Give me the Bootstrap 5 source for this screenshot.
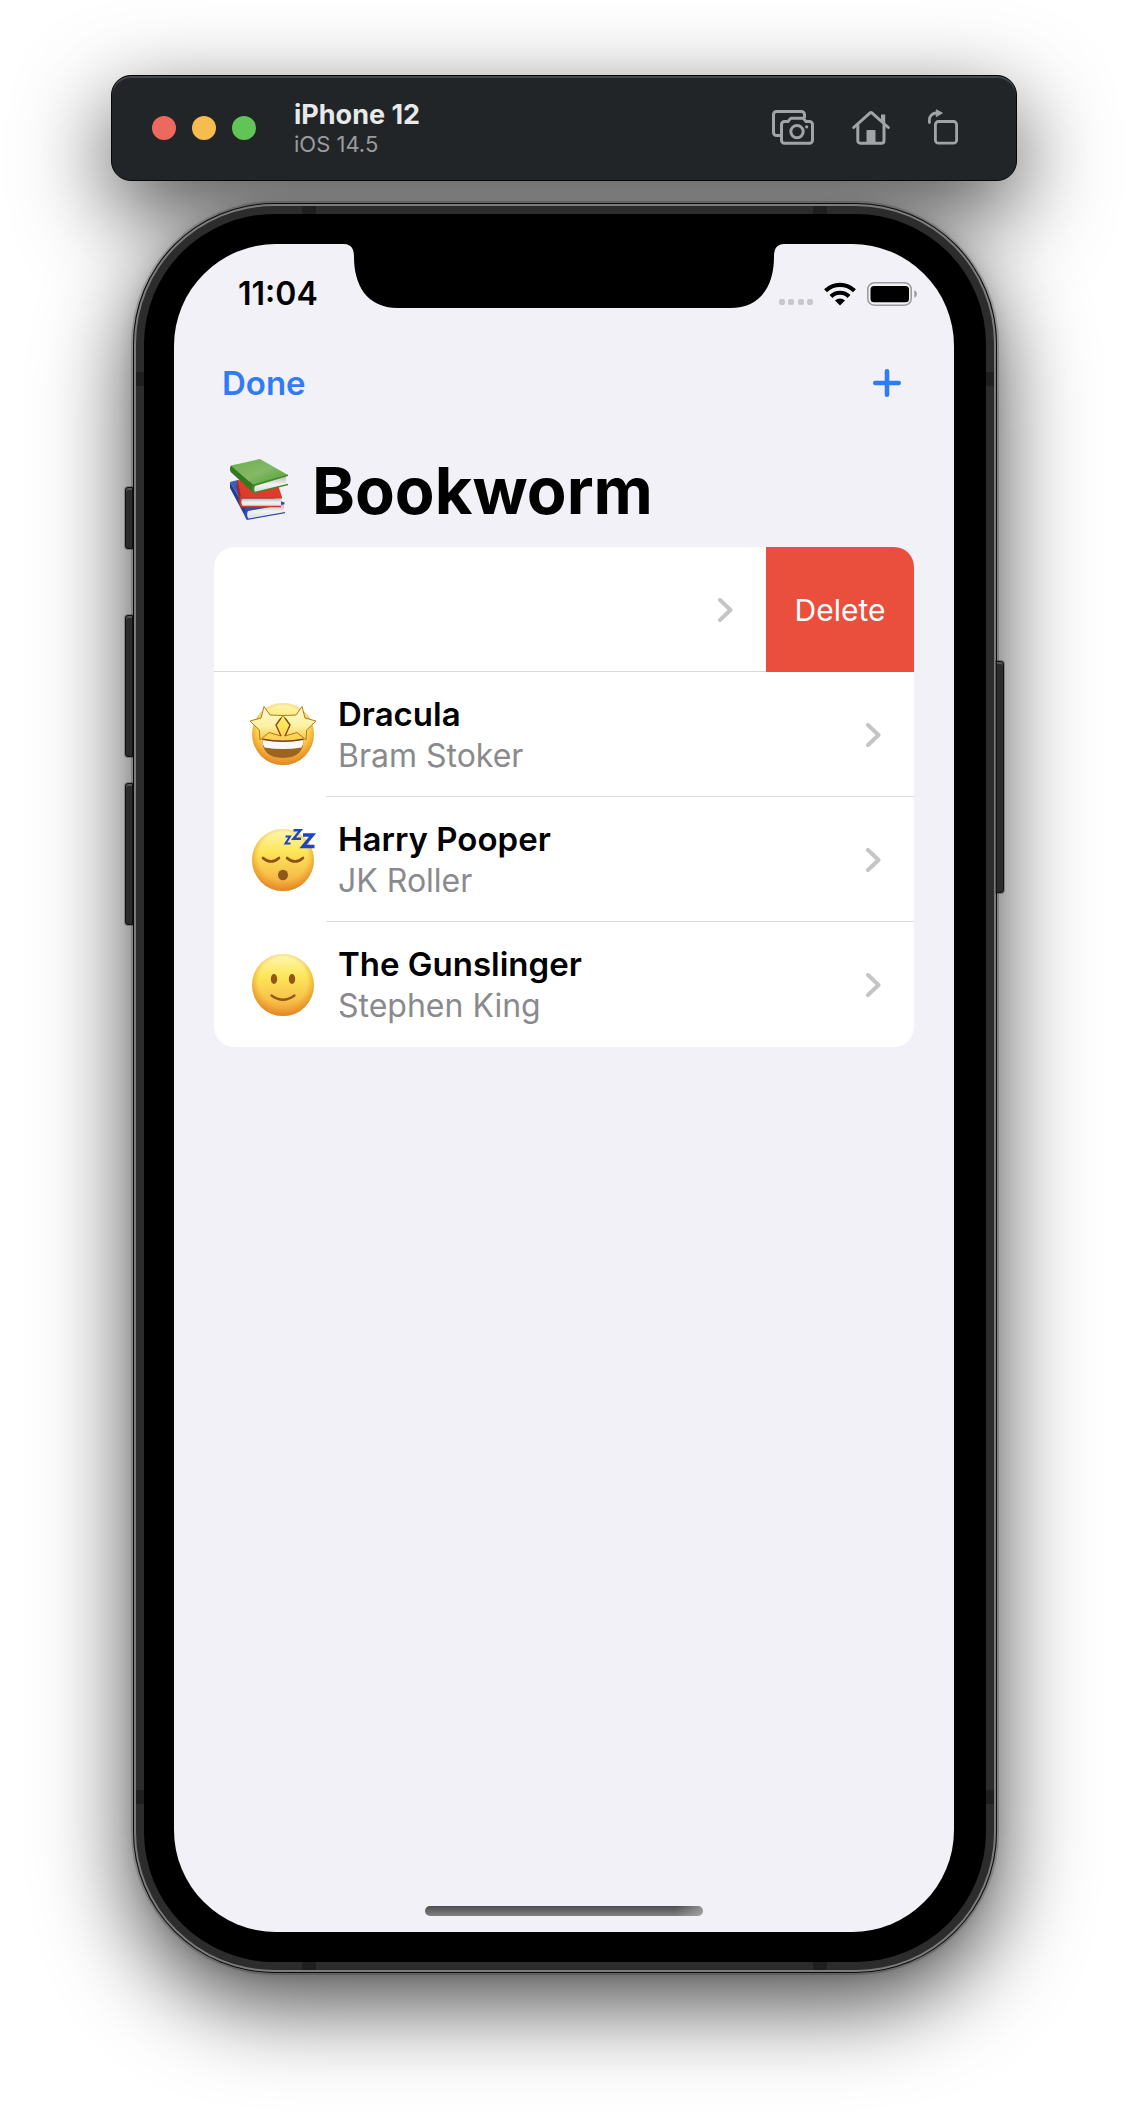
<!DOCTYPE html>
<html lang="en">
<head>
<meta charset="utf-8">
<meta name="viewport" content="width=device-width, initial-scale=1">
<title>Bookworm</title>
<link href="https://cdn.jsdelivr.net/npm/bootstrap@5.3.0/dist/css/bootstrap.min.css" rel="stylesheet">
<style>
  body { font-family: Inter, "Liberation Sans", sans-serif; background: #fff; color: #000; overflow-x: hidden; }
  svg { display: block; flex: none; }
  .stage { position: relative; z-index: 0; max-width: 906px; padding: 75px 0 151px; }

  /* simulator title bar */
  .sim-bar { position: relative; min-height: 106px; border-radius: 20px; background: #222528; border: 1px solid #050606;
    box-shadow: inset 0 2px 0 #43484a, 0 30px 90px rgba(0,0,0,.7); padding: 0 58px 0 40px; }
  .lights { gap: 16px; margin-right: 38px; }
  .light-dot { width: 24px; height: 24px; border: 0; border-radius: 50%; padding: 0; }
  .dot-close { background: #ed695e; } .dot-min { background: #f5bd4f; } .dot-zoom { background: #61c454; }
  .sim-label { padding-top: 2px; }
  .sim-name { font-size: 27px; line-height: 30px; font-weight: 700; color: #e8eaea; }
  .sim-os { font-size: 22px; line-height: 28px; color: #999c9e; }
  .tools { gap: 38px; }
  .tool-btn { border: 0; padding: 0; background: none; color: #a0a4a6; }

  /* phone body; its shadow sits on a layer behind the title bar */
  .phone { position: relative; margin: 22px 20px 0 22px; padding: 11px; border-radius: 141px; background: #2c2c2c;
    box-shadow: inset 0 0 0 1px #0c0c0c, inset 0 0 0 3px #7b7b7b, 0 0 0 2px rgba(0,0,0,.16); }
  .phone::before { content: ""; position: absolute; inset: 0; z-index: -1; border-radius: 141px;
    box-shadow: 0 30px 90px rgba(0,0,0,.72), 0 0 16px rgba(0,0,0,.12); }
  .bezel { background: #000; border-radius: 130px; padding: 30px 32px 30px 30px; }
  .screen { position: relative; min-height: 1688px; border-radius: 102px; background: #f2f1f7; overflow: hidden; }
  .side-key { position: absolute; width: 8px; background: #2b2b2b; border: 1px solid #111; box-shadow: inset 0 2px 0 #555, 0 0 0 1px rgba(0,0,0,.25); }
  .key-left { left: -8px; border-radius: 3px 0 0 3px; }
  .key-right { right: -7px; border-radius: 0 3px 3px 0; }
  .key-mute { top: 284px; height: 62px; } .key-up { top: 412px; height: 142px; } .key-down { top: 580px; height: 142px; }
  .key-power { top: 458px; height: 232px; }
  .band { position: absolute; background: #1f1f1f; }
  .band-v { width: 14px; height: 8px; } .band-h { width: 8px; height: 14px; }
  .b-top { top: 3px; } .b-bottom { bottom: 3px; } .b-left { left: 3px; } .b-right { right: 3px; }
  .b-x1 { left: 169px; } .b-x2 { right: 170px; } .b-y1 { top: 169px; } .b-y2 { bottom: 169px; }
  .notch { position: absolute; top: 0; left: 50%; margin-left: -220px; }

  .status { min-height: 100px; padding: 0 37px 0 64px; }
  .clock { font-size: 32px; line-height: 40px; font-weight: 600; }
  .status-icons { gap: 11px; }
  .app-nav { min-height: 78px; padding: 0 53px 0 48px; }
  .nav-btn { border: 0; background: none; padding: 0; color: #2f7cf6; font-size: 33px; line-height: 40px; font-weight: 600; }
  .app-title { min-height: 125px; padding: 12px 40px 0 56px; gap: 24px; }
  .app-title h1 { font-size: 65px; line-height: 80px; font-weight: 700; }

  .books { margin: 0 40px; border-radius: 20px; overflow: hidden; }
  .book { border: 0; padding: 0; min-height: 125px; background: #fff; color: #000; border-radius: 0; }
  .swiped { box-shadow: inset 0 -1px 0 #d8d8da; }
  .open-link { padding-right: 33px; }
  .delete-btn { width: 148px; border: 0; border-radius: 0; background: #ea4e3d; color: #fff; font-size: 30px; line-height: 40px; padding: 0; }
  .delete-btn:hover { background: #d8402f; color: #fff; }
  .book-link { color: #000; text-decoration: none; padding-left: 34px; }
  .book-text { margin-left: 8px; padding: 0 33px 0 12px; }
  .lined { box-shadow: inset 0 -1px 0 #dcdcde; }
  .book-name { font-size: 33px; line-height: 41px; font-weight: 600; }
  .book-author { font-size: 32px; line-height: 41px; color: #8a8a8e; }
  .home-pill { position: absolute; left: 50%; bottom: 16px; width: 278px; height: 10px; margin-left: -139px; border-radius: 5px;
    background: linear-gradient(100deg, transparent 90%, rgba(190,190,190,.6)), linear-gradient(#4e4e50, #808082); }
</style>
</head>
<body>
<!-- shared gradients -->
<svg width="0" height="0" class="position-absolute" aria-hidden="true">
  <defs>
    <linearGradient id="faceFill" x1="0" y1="0" x2="0" y2="1"><stop offset="0" stop-color="#fef6b4"/><stop offset=".35" stop-color="#fde75a"/><stop offset=".7" stop-color="#f8c54c"/><stop offset="1" stop-color="#f0a038"/></linearGradient>
    <radialGradient id="faceRim" cx=".5" cy=".44" r=".57"><stop offset=".68" stop-color="#ec9423" stop-opacity="0"/><stop offset="1" stop-color="#dd7d1a" stop-opacity=".85"/></radialGradient>
    <linearGradient id="starFill" x1="0" y1="0" x2="0" y2="1"><stop offset="0" stop-color="#fffbd6"/><stop offset=".6" stop-color="#fdf0a0"/><stop offset="1" stop-color="#f3c548"/></linearGradient>
    <linearGradient id="coverGreen" x1="0" y1="0" x2="1" y2="1"><stop offset="0" stop-color="#6cae4b"/><stop offset=".5" stop-color="#84b967"/><stop offset="1" stop-color="#4c9b2e"/></linearGradient>
    <linearGradient id="pages" x1="0" y1="0" x2="0" y2="1"><stop offset="0" stop-color="#b5b5b5"/><stop offset=".5" stop-color="#f2f2f2"/><stop offset="1" stop-color="#dcdcdc"/></linearGradient>
    <symbol id="chevron" viewBox="0 0 15 24"><path d="M2 2l10.500 10L2 22" fill="none" stroke="#c5c5c7" stroke-width="4" stroke-linecap="round" stroke-linejoin="round"/></symbol>
  </defs>
</svg>

<div class="stage mx-auto">
  <header class="sim-bar d-flex align-items-center">
    <div class="lights d-flex">
      <button type="button" class="light-dot dot-close" aria-label="Close"></button>
      <button type="button" class="light-dot dot-min" aria-label="Minimize"></button>
      <button type="button" class="light-dot dot-zoom" aria-label="Zoom"></button>
    </div>
    <div class="sim-label">
      <div class="sim-name">iPhone 12</div>
      <div class="sim-os">iOS 14.5</div>
    </div>
    <div class="tools d-flex ms-auto">
      <button type="button" class="tool-btn" aria-label="Screenshot">
        <svg width="42" height="38" viewBox="0 0 42 38" fill="none" stroke="currentColor" stroke-width="3">
          <path d="M8 26.500H4.500a3 3 0 0 1-3-3V5.500a3 3 0 0 1 3-3h25a3 3 0 0 1 3 3V9"/>
          <path d="M12.500 12.500h3.500l2.200-2.600a2 2 0 0 1 1.500-.7h10.600a2 2 0 0 1 1.500.7l2.200 2.600h3.500a3 3 0 0 1 3 3v15.800a3 3 0 0 1-3 3h-25a3 3 0 0 1-3-3V15.500a3 3 0 0 1 3-3z"/>
          <circle cx="25" cy="22.600" r="6.200"/><circle cx="34.600" cy="17.800" r="1.600" fill="currentColor" stroke="none"/>
        </svg>
      </button>
      <button type="button" class="tool-btn" aria-label="Home">
        <svg width="38" height="38" viewBox="0 0 38 38" fill="none" stroke="currentColor" stroke-width="3" stroke-linecap="round" stroke-linejoin="round">
          <path d="M1.700 18.500L17.800 4.200a1.800 1.800 0 0 1 2.400 0L36.300 18.500"/>
          <path d="M5.800 15.500v16.300a2.400 2.400 0 0 0 2.400 2.400h21.400a2.400 2.400 0 0 0 2.400-2.400V15.500"/>
          <path d="M29 5.500h4.200V15L29 11.500z" fill="currentColor" stroke="none"/>
          <path d="M14.500 34V22a1 1 0 0 1 1-1h7a1 1 0 0 1 1 1v12z" fill="currentColor" stroke="none"/>
        </svg>
      </button>
      <button type="button" class="tool-btn" aria-label="Rotate">
        <svg width="30" height="38" viewBox="0 0 30 38" fill="none" stroke="currentColor" stroke-width="2.800">
          <rect x="7.400" y="12.500" width="21.200" height="21.700" rx="3"/>
          <path d="M1.400 13.500V11a7 7 0 0 1 7-7h1" stroke-linecap="round"/>
          <path d="M8.300 0.800l6 3.200-6 3.600z" fill="currentColor" stroke="currentColor" stroke-width="1" stroke-linejoin="round"/>
        </svg>
      </button>
    </div>
  </header>

  <div class="phone">
    <span class="side-key key-left key-mute"></span><span class="side-key key-left key-up"></span><span class="side-key key-left key-down"></span>
    <span class="side-key key-right key-power"></span>
    <span class="band band-v b-top b-x1"></span><span class="band band-v b-top b-x2"></span>
    <span class="band band-v b-bottom b-x1"></span><span class="band band-v b-bottom b-x2"></span>
    <span class="band band-h b-left b-y1"></span><span class="band band-h b-right b-y1"></span>
    <span class="band band-h b-left b-y2"></span><span class="band band-h b-right b-y2"></span>

    <div class="bezel">
      <main class="screen">
        <svg class="notch" width="440" height="64" viewBox="0 0 440 64" aria-hidden="true"><path d="M-2 -1V0C7 0 10 4 10 13C10 40 22 64 54 64H386C418 64 430 40 430 13C430 4 433 0 442 0V-1z"/></svg>

        <div class="status d-flex align-items-center justify-content-between">
          <div class="clock">11:04</div>
          <div class="status-icons d-flex">
            <svg width="34" height="24" viewBox="0 0 34 24" fill="#c8c8cc"><rect y="17" width="6" height="6" rx="2"/><rect x="9" y="17" width="6" height="6" rx="2"/><rect x="19" y="17" width="6" height="6" rx="2"/><rect x="28" y="17" width="6" height="6" rx="2"/></svg>
            <svg width="32" height="24" viewBox="0 0 32 24" fill="none" stroke="#000" stroke-width="4.200"><path d="M1.500 8.800a20.500 20.500 0 0 1 29 0"/><path d="M7 14.500a12.700 12.700 0 0 1 18 0"/><path d="M16 23.600l-5-5.100a7.200 7.200 0 0 1 10 0z" fill="#000" stroke="none"/></svg>
            <svg width="50" height="24" viewBox="0 0 50 24"><rect x=".8" y=".8" width="43.400" height="22.400" rx="6.500" fill="none" stroke="#9c9c9f" stroke-width="1.600"/><rect x="3.500" y="4" width="38.500" height="16.200" rx="3.500"/><path d="M47.300 8.300c3.400 1.200 3.400 6.200 0 7.400z" fill="#9c9c9f"/></svg>
          </div>
        </div>

        <nav class="app-nav d-flex align-items-center justify-content-between">
          <button type="button" class="nav-btn">Done</button>
          <button type="button" class="nav-btn" aria-label="Add">
            <svg width="28" height="28" viewBox="0 0 28 28" stroke="currentColor" stroke-width="4.600" stroke-linecap="round"><path d="M14 2.300v23.400M2.300 14h23.400"/></svg>
          </button>
        </nav>

        <div class="app-title d-flex align-items-center">
          <svg width="58" height="64" viewBox="0 0 58 64" aria-hidden="true">
            <path d="M0 23L8 21 54 44 17 52z" fill="#3a5cbc"/>
            <path d="M0 23q-1 4 .5 7L17 61q-2-5 0-9z" fill="#223c93"/>
            <path d="M17 51.500l37-6.500v8L18.500 59.500q-2.500-4-1.500-8z" fill="url(#pages)"/>
            <path d="M5 26L50 42l4.500 1.500v1.700L18 52q-2 4 .5 7.500L55 53v1.300L17 61Q13 56 15 50z" fill="#2d4db0"/>
            <path d="M7.500 21L48 26l4 12-41 1z" fill="#de3b2c"/>
            <path d="M7.500 21q-1.500 6 0 11l3.500 15.500q-1.500-5 0-9z" fill="#a8271e"/>
            <path d="M11 39.500H51v7.500l-39 .3q-2-4-1-7.800z" fill="url(#pages)"/>
            <path d="M10 38h42v1.500H12q-1.500 3.700.5 7.300H51v1.400H11Q8 44 10 38z" fill="#d4382a"/>
            <path d="M1 6.500L30 0 58 16 24 26.500z" fill="url(#coverGreen)"/>
            <path d="M1 6.500q-2 3-.3 6.500L23.500 34q-2-4 .5-7.500z" fill="#337a1f"/>
            <path d="M24 26.500L56 17v8.500L24.500 33.500q-2-3.500-.5-7z" fill="url(#pages)"/>
            <path d="M23 25.500L58 15.500v1.600L25 27q-1.500 3 0 5.800l33-8v1.500L23.500 34.500Q20.500 30 23 25.500z" fill="#3f8c28"/>
          </svg>
          <h1 class="mb-0">Bookworm</h1>
        </div>

        <div class="books list-group list-group-flush">
          <div class="book list-group-item d-flex">
            <a href="#" class="open-link swiped flex-fill d-flex align-items-center justify-content-end" aria-label="Open book"><svg width="15" height="24"><use href="#chevron"/></svg></a>
            <button type="button" class="btn delete-btn">Delete</button>
          </div>
          <div class="book list-group-item d-flex">
            <a href="#" class="book-link flex-fill d-flex align-items-center">
              <svg width="70" height="66" viewBox="0 0 70 66" aria-hidden="true">
                <circle cx="35" cy="32" r="31" fill="url(#faceFill)"/><circle cx="35" cy="32" r="31" fill="url(#faceRim)"/>
                <path d="M14.500 37q20.500 4 41 0 1 18.500-20.500 19-21.500-.5-20.500-19z" fill="#9b651f"/>
                <path d="M14.500 37.500q20.500 4 41 0 .3 4.500-2 8-18.500 3-37 0-2.300-3.500-2-8z" fill="#f8f8f8"/>
                <path d="M14.500 37.300q20.500 4 41 0" fill="none" stroke="#7d4312" stroke-width="1.400"/>
                <g fill="url(#starFill)" stroke="#b8741f" stroke-width="1" stroke-linejoin="round">
                  <path d="M16 4.500l6 8.500 13 .5-7 9.500 5 11-12-3.500-9 7.500-.7-10L2 19l11-3z"/>
                  <path d="M54 4.500l-6 8.500-13 .5 7 9.500-5 11 12-3.500 9 7.500.7-10L68 19l-11-3z"/>
                </g>
                <path d="M33 16l-5 7 5 11M37 16l5 7-5 11" fill="none" stroke="#8a4b14" stroke-width="1.300" stroke-linejoin="round"/>
              </svg>
              <span class="book-text lined flex-fill align-self-stretch d-flex align-items-center justify-content-between">
                <span><span class="book-name d-block">Dracula</span><span class="book-author d-block">Bram Stoker</span></span>
                <svg width="15" height="24"><use href="#chevron"/></svg>
              </span>
            </a>
          </div>
          <div class="book list-group-item d-flex">
            <a href="#" class="book-link flex-fill d-flex align-items-center">
              <svg width="70" height="66" viewBox="0 0 70 66" aria-hidden="true">
                <circle cx="35" cy="33" r="31" fill="url(#faceFill)"/><circle cx="35" cy="33" r="31" fill="url(#faceRim)"/>
                <path d="M15 31q8 7 16 0M39 31q8 7 16 0" fill="none" stroke="#8d5215" stroke-width="2.600" stroke-linecap="round"/>
                <ellipse cx="35" cy="48" rx="5" ry="5.200" fill="#8f581b"/>
                <g fill="none" stroke="#1c44c4" stroke-linejoin="miter"><path d="M37.500 9.500h4.500l-4.500 7h5" stroke-width="2"/><path d="M45.500 3.200h7l-7 8.600h7.500" stroke-width="2.400"/><path d="M55 8h9.500L55 19.500h11.500" stroke-width="3.400"/></g>
              </svg>
              <span class="book-text lined flex-fill align-self-stretch d-flex align-items-center justify-content-between">
                <span><span class="book-name d-block">Harry Pooper</span><span class="book-author d-block">JK Roller</span></span>
                <svg width="15" height="24"><use href="#chevron"/></svg>
              </span>
            </a>
          </div>
          <div class="book list-group-item d-flex">
            <a href="#" class="book-link flex-fill d-flex align-items-center">
              <svg width="70" height="66" viewBox="0 0 70 66" aria-hidden="true">
                <circle cx="35" cy="33" r="31" fill="url(#faceFill)"/><circle cx="35" cy="33" r="31" fill="url(#faceRim)"/>
                <ellipse cx="26" cy="27" rx="3.200" ry="5" fill="#91561a"/><ellipse cx="44" cy="27" rx="3.200" ry="5" fill="#91561a"/>
                <path d="M23.500 43.500q11.500 8.500 23 0" fill="none" stroke="#91561a" stroke-width="2.200" stroke-linecap="round"/>
              </svg>
              <span class="book-text flex-fill align-self-stretch d-flex align-items-center justify-content-between">
                <span><span class="book-name d-block">The Gunslinger</span><span class="book-author d-block">Stephen King</span></span>
                <svg width="15" height="24"><use href="#chevron"/></svg>
              </span>
            </a>
          </div>
        </div>
        <div class="home-pill"></div>
      </main>
    </div>
  </div>
</div>
<script src="https://cdn.jsdelivr.net/npm/bootstrap@5.3.0/dist/js/bootstrap.bundle.min.js"></script>
</body>
</html>
